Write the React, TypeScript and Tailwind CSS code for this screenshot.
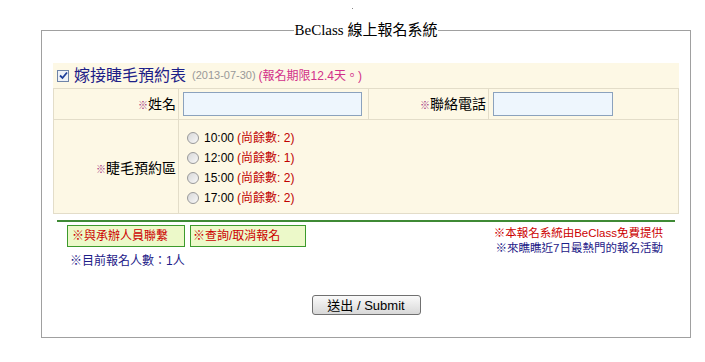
const font = { fontFamily: '"Liberation Sans", "Noto Sans CJK TC", sans-serif' };

type Slot = { time: string; left: number };

const slots: Slot[] = [
	{ time: '10:00', left: 2 },
	{ time: '12:00', left: 1 },
	{ time: '15:00', left: 2 },
	{ time: '17:00', left: 2 },
];

function Radio() {
	return (
		<span className="inline-block w-[12px] h-[12px] rounded-full border border-[#9a9a9a] bg-gradient-to-br from-[#d8d8d8] to-[#f8f8f8] mr-[5px]" />
	);
}

function CheckBox() {
	return (
		<span className="inline-flex items-center justify-center w-[12px] h-[12px] border border-[#6f84a8] bg-[#eef2f8] mr-[5px]">
			<svg width="9" height="9" viewBox="0 0 9 9">
				<path d="M1 4.5 L3.5 7 L8 1.5" fill="none" stroke="#1d3f9a" strokeWidth="1.8" />
			</svg>
		</span>
	);
}

function Label({ text }: { text: string }) {
	return (
		<span className="text-[14px] text-black">
			<span className="text-[10px] text-[#a0307e]">※</span>
			{text}
		</span>
	);
}

export default function App() {
	return (
		<div className="w-[705px] h-[362px] bg-white" style={font}>
			<div className="h-[20px] flex justify-center">
				<div className="mt-[8px] w-px h-px bg-[#888]" />
			</div>
			<div className="px-[41px]">
				<fieldset className="w-[648px] border border-[#a0a0a0] px-[11px] pb-[22px]">
					<legend className="mx-auto px-[1px] text-[15px] leading-[20px] text-black"
						style={{ fontFamily: '"Liberation Serif", "Noto Sans CJK TC", serif' }}>
						BeClass 線上報名系統
					</legend>

					<div className="mt-[23px] bg-[#fdf8e5]">
						<div className="h-[25px] flex items-center pl-[4px]">
							<CheckBox />
							<span className="text-[16px] text-[#1d2088]">嫁接睫毛預約表</span>
							<span className="ml-[6px] text-[11px] text-[#999]">(2013-07-30)</span>
							<span className="ml-[3px] text-[12px] text-[#d2308a]">(報名期限12.4天。)</span>
						</div>
						<table className="w-[625px] table-fixed border-collapse">
							<tbody>
								<tr className="h-[31px]">
									<td className="w-[125px] border border-[#e3ddc9] text-right pr-[2px]">
										<Label text="姓名" />
									</td>
									<td className="w-[190px] border border-[#e3ddc9] pl-[4px]">
										<input className="block w-[179px] h-[24px] border border-[#8ba2bd] bg-[#eef6fd]" />
									</td>
									<td className="w-[120px] border border-[#e3ddc9] text-right pr-[2px]">
										<Label text="聯絡電話" />
									</td>
									<td className="w-[190px] border border-[#e3ddc9] pl-[4px]">
										<input className="block w-[120px] h-[24px] border border-[#8ba2bd] bg-[#eef6fd]" />
									</td>
								</tr>
								<tr className="h-[94px]">
									<td className="border border-[#e3ddc9] text-right pr-[2px] pt-[2px]">
										<Label text="睫毛預約區" />
									</td>
									<td colSpan={3} className="border border-[#e3ddc9] pl-[8px] pt-[7px] pb-[5px]">
										{slots.map((s) => (
											<div key={s.time} className="h-[20px] flex items-center text-[12px]">
												<Radio />
												<span className="text-black">{s.time}</span>
												<span className="ml-[3px] text-[#c00000]">(尚餘數: {s.left})</span>
											</div>
										))}
									</td>
								</tr>
							</tbody>
						</table>
					</div>

					<div className="mt-[6px] mx-[4px] h-[2px] bg-[#3f8a35]" />

					<div className="flex justify-between">
						<div className="pl-[14px]">
							<div className="mt-[3px] flex gap-[5px]">
								<div className="w-[118px] h-[22px] flex items-center px-[4px] border border-[#3c9a2c] bg-[#ecf9c9] text-[12px] text-[#cc0000]">
									※與承辦人員聯繫
								</div>
								<div className="w-[116px] h-[22px] flex items-center px-[2px] border border-[#3c9a2c] bg-[#ecf9c9] text-[12px] text-[#cc0000]">
									※查詢/取消報名
								</div>
							</div>
							<div className="mt-[6px] pl-[3px] text-[12px] leading-[16px] text-[#1d2088]">
								※目前報名人數：1人
							</div>
						</div>
						<div className="pr-[16px] pt-[4px] text-right text-[11.5px] leading-[15px]">
							<div className="text-[#cc0000]">※本報名系統由BeClass免費提供</div>
							<div className="text-[#1d2088]">※來瞧瞧近7日最熱門的報名活動</div>
						</div>
					</div>

					<div className="mt-[26px] flex justify-center">
						<button className="w-[109px] h-[20px] rounded-[3px] border border-[#707070] bg-gradient-to-b from-[#fafafa] to-[#d8d8d8] text-[13px] leading-none text-black">
							送出 / Submit
						</button>
					</div>
				</fieldset>
			</div>
		</div>
	);
}
